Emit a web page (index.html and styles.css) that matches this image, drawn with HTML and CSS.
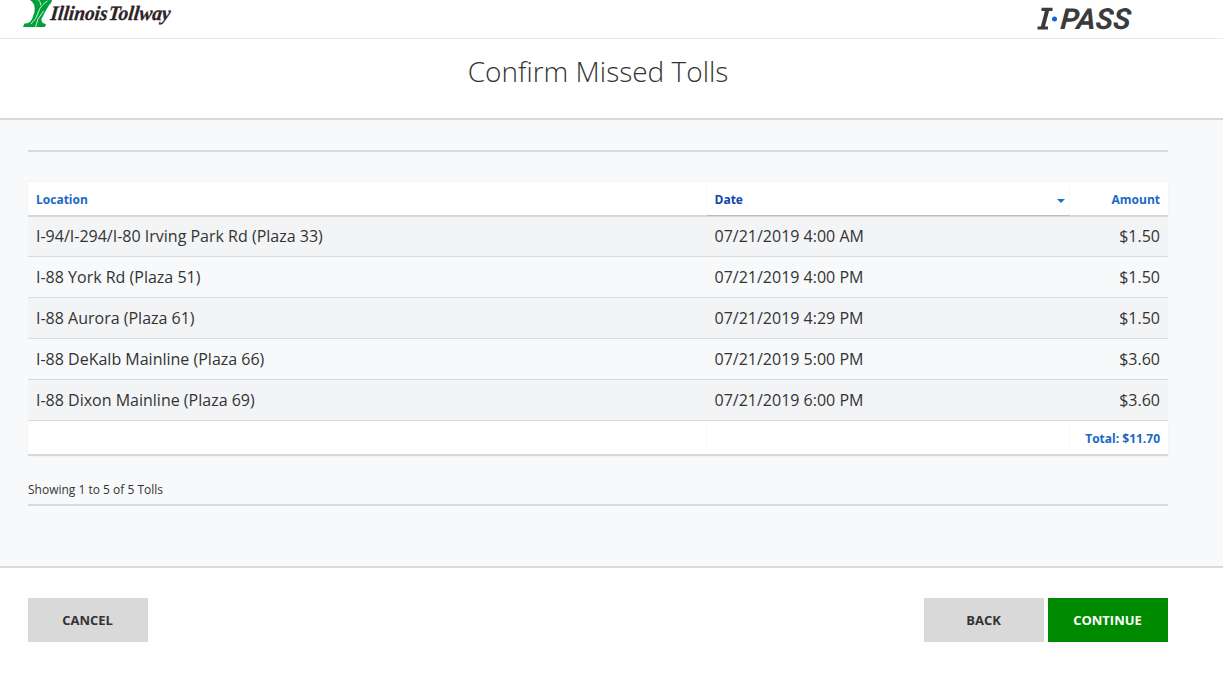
FILE: index.html
```html
<!DOCTYPE html>
<html lang="en">
<head>
<meta charset="utf-8">
<title>Confirm Missed Tolls</title>
<link rel="stylesheet" href="styles.css">
</head>
<body>
<header class="site-header">
  <svg class="tollway-logo" width="152" height="38" viewBox="0 0 152 38" role="img" aria-label="Illinois Tollway">
    <path fill="#00a13a" d="M7 0H29Q28.500 3.500 26.500 4.500L22.500 11L18.500 19Q18 23.500 23 24L22 27H0L1.500 23.500Q7 23.500 9 19L11.500 12Q12.500 3 7 0Z"/>
    <path fill="none" stroke="#fff" stroke-width=".8" d="M24.500 1Q17.500 5 15.500 12T8 24M15.500 0Q18 2 17.500 5M20.500 11Q13.500 19 12.500 27"/>
    <text class="tollway-text" transform="translate(27 20) skewX(-6)" textLength="57" lengthAdjust="spacingAndGlyphs">Illinois</text>
    <text class="tollway-text" transform="translate(85 20) skewX(-6)" textLength="62" lengthAdjust="spacingAndGlyphs">Tollway</text>
  </svg>
  <svg class="ipass-logo" width="100" height="38" viewBox="0 0 100 38" role="img" aria-label="I-PASS">
    <text class="ipass-text" transform="translate(23 29) skewX(-5)" x="0" y="0" textLength="70" lengthAdjust="spacingAndGlyphs">PASS</text>
    <path fill="none" stroke="#3b3b3d" stroke-width="3.2" d="M4.500 9.300H15.500M.500 28H11"/>
    <path fill="none" stroke="#3b3b3d" stroke-width="4" d="M10.500 9L5.500 28"/>
    <circle cx="17.500" cy="19" r="2.500" fill="#0b62e0"/>
  </svg>
</header>
<section class="title-bar"><h1 class="title">Confirm Missed Tolls</h1></section>
<main class="content">
  <div class="panel">
    <table class="tolls">
      <thead>
        <tr><th class="location">Location</th><th class="date"><div class="sort"><span>Date</span><svg class="caret" width="8" height="4" viewBox="0 0 8 4"><path fill="#1a6fd0" d="M0 0H8L4 4Z"/></svg></div></th><th class="amount">Amount</th></tr>
      </thead>
      <tbody>
        <tr><td>I-94/I-294/I-80 Irving Park Rd (Plaza 33)</td><td>07/21/2019 4:00 AM</td><td class="amount">$1.50</td></tr>
        <tr><td>I-88 York Rd (Plaza 51)</td><td>07/21/2019 4:00 PM</td><td class="amount">$1.50</td></tr>
        <tr><td>I-88 Aurora (Plaza 61)</td><td>07/21/2019 4:29 PM</td><td class="amount">$1.50</td></tr>
        <tr><td>I-88 DeKalb Mainline (Plaza 66)</td><td>07/21/2019 5:00 PM</td><td class="amount">$3.60</td></tr>
        <tr><td>I-88 Dixon Mainline (Plaza 69)</td><td>07/21/2019 6:00 PM</td><td class="amount">$3.60</td></tr>
      </tbody>
      <tfoot>
        <tr><th></th><th></th><th class="amount">Total: $11.70</th></tr>
      </tfoot>
    </table>
    <p class="summary">Showing 1 to 5 of 5 Tolls</p>
  </div>
</main>
<footer class="actions">
  <button class="btn">CANCEL</button>
  <div class="next"><button class="btn">BACK</button><button class="btn primary">CONTINUE</button></div>
</footer>
</body>
</html>
```
FILE: styles.css
```css
* { box-sizing: border-box; }
body {
  margin: 0;
  background: #fff;
  color: #333;
  font-family: "Open Sans", sans-serif;
  overflow: hidden;
}
.site-header {
  display: flex;
  justify-content: space-between;
  height: 39px;
  padding: 0 86px 0 23px;
  border-bottom: 1px solid #e8e8e8;
}
.tollway-text {
  font: italic bold 20.5px "Liberation Serif", serif;
  fill: #2b2326;
  stroke: #2b2326;
  stroke-width: .3px;
}
.ipass-text {
  font: italic bold 29px Roboto, sans-serif;
  fill: #3b3b3d;
}
.title-bar {
  height: 81px;
  padding: 11px 55px 0 28px;
  border-bottom: 2px solid #d9d9d9;
}
.title {
  margin: 0;
  text-align: center;
  font-size: 28px;
  font-weight: 300;
  line-height: 42px;
}
.content {
  height: 448px;
  padding: 30px 55px 0 28px;
  background: #f8f9fb;
  border-bottom: 2px solid #d9d9d9;
}
.panel {
  height: 356px;
  padding-top: 30px;
  border-top: 2px solid #d7d9db;
  border-bottom: 2px solid #d7d9db;
}
.tolls {
  width: 1140px;
  table-layout: fixed;
  border-collapse: separate;
  border-spacing: 0;
  font-size: 16px;
}
.tolls th {
  height: 35px;
  padding: 2px 8px 0;
  background: #fff;
  border-bottom: 2px solid #d5d7d9;
  box-shadow: 0 0 1px #d5d8db;
  color: #1b68c4;
  font-size: 12px;
  font-weight: 700;
  line-height: 18px;
  text-align: left;
}
.tolls .location { width: 678.5px; }
.tolls .date {
  width: 363.5px;
  padding-right: 5px;
  border-bottom: 1px solid #d5d7d9;
  padding-bottom: 1px;
  box-shadow: 0 0 1px #d5d8db, inset 0 -1px 0 #b9bbbd;
  color: #0c47a8;
}
.sort {
  display: flex;
  align-items: center;
  justify-content: space-between;
}
.caret { margin-top: 2px; }
.tolls td {
  height: 41px;
  padding: 0 8px;
  border-bottom: 1px solid #d9dbdd;
  line-height: 24px;
}
.tolls tbody tr:nth-child(odd) { background: #f3f4f6; }
.tolls tbody tr:first-child td { height: 40px; padding-bottom: 2px; }
.tolls .amount { text-align: right; }
.summary {
  margin: 24px 0 0;
  font-size: 12px;
  line-height: 20px;
}
.actions {
  display: flex;
  justify-content: space-between;
  padding: 30px 55px 54px 28px;
}
.next { display: flex; gap: 4px; }
.btn {
  width: 120px;
  height: 44px;
  padding: 0 1px 0 0;
  border: 0;
  background: #d9d9d9;
  color: #333;
  font: 700 13px "Open Sans", sans-serif;
}
.primary { background: #008a00; color: #fff; }
```
